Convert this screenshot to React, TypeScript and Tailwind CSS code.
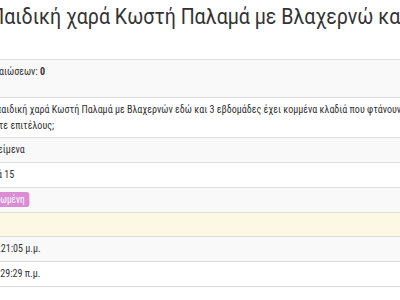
type Row = { tone: string; h?: string; content: React.ReactNode };

function Cell({ children }: { children?: React.ReactNode }) {
  return <div className="whitespace-nowrap">{children}</div>;
}

export default function App() {
  const rows: Row[] = [
    {
      tone: "bg-[#f9f9f9]",
      h: "min-h-[38px]",
      content: (
        <Cell>
          <span className="-ml-[19px]">
            Επιβεβαιώσεων: <strong className="font-bold">0</strong>
          </span>
        </Cell>
      ),
    },
    {
      tone: "bg-white",
      content: (
        <>
          <Cell>
            Η παιδική χαρά Κωστή Παλαμά με Βλαχερνών εδώ και 3 εβδομάδες έχει κομμένα κλαδιά που φτάνουν ως το έδαφος.
          </Cell>
          <Cell>Πότε επιτέλους;</Cell>
        </>
      ),
    },
    {
      tone: "bg-[#f9f9f9]",
      content: (
        <Cell>
          <span className="-ml-[52px]">Ογκώδη αντικείμενα</span>
        </Cell>
      ),
    },
    {
      tone: "bg-white",
      content: (
        <Cell>
          <span className="-ml-[52px]">Κωστή Παλαμά 15</span>
        </Cell>
      ),
    },
    {
      tone: "bg-[#f9f9f9]",
      content: (
        <Cell>
          <span className="-ml-[28px] inline-block rounded-[3px] bg-[#da8cd4] px-[5px] text-[10.5px] leading-[15px] text-white">
            Ολοκληρωμένη
          </span>
        </Cell>
      ),
    },
    { tone: "bg-[#fcf8e3]", content: <Cell>&nbsp;</Cell> },
    {
      tone: "bg-[#f9f9f9]",
      content: (
        <Cell>
          <span className="-ml-[49px]">25/05/2017 9:21:05 μ.μ.</span>
        </Cell>
      ),
    },
    {
      tone: "bg-white",
      content: (
        <Cell>
          <span className="-ml-[55px]">26/05/2017 10:29:29 π.μ.</span>
        </Cell>
      ),
    },
    { tone: "bg-white", content: <Cell>&nbsp;</Cell> },
  ];

  return (
    <div className="w-[400px] h-[300px] overflow-hidden bg-white text-[#333]">
      <div className="w-[450px] origin-top-left scale-x-[0.89]">
        <h1 className="-ml-[11px] mt-[4px] whitespace-nowrap font-['Roboto',sans-serif] text-[22px] leading-[26px] font-normal">
          Παιδική χαρά Κωστή Παλαμά με Βλαχερνώ καθαρισμός κλαδιών
        </h1>
        <div className="mt-[29px] -ml-[14px] border-b border-[#ddd] font-['Roboto_Condensed',Roboto,sans-serif] text-[11.3px] leading-[15.7px]">
          {rows.map((r, i) => (
            <div key={i} className={`border-t border-[#ddd] py-[4px] ${r.tone} ${r.h ?? ""}`}>
              {r.content}
            </div>
          ))}
        </div>
      </div>
    </div>
  );
}
